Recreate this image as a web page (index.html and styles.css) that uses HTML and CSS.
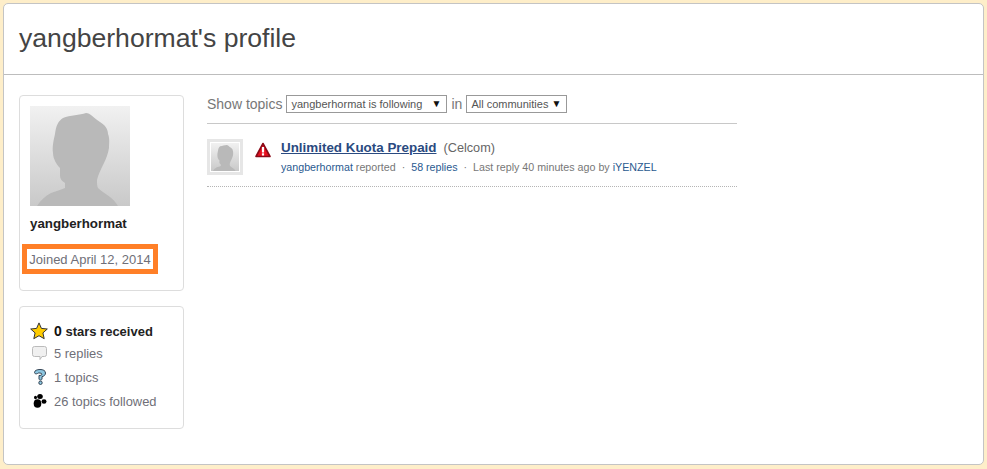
FILE: index.html
```html
<!DOCTYPE html>
<html lang="en">
<head>
<meta charset="utf-8">
<title>yangberhormat's profile</title>
<link rel="stylesheet" href="styles.css">
</head>
<body>
<div class="page">
  <header class="head"><h1>yangberhormat's profile</h1></header>
  <div class="content">
    <aside class="side">
      <section class="box profile">
        <svg class="avatar" width="100" height="100" viewBox="0 0 100 100">
          <defs><linearGradient id="g" x1="0" y1="0" x2="0" y2="1"><stop offset="0" stop-color="#f1f1f1"/><stop offset="1" stop-color="#c9c9c9"/></linearGradient></defs>
          <rect width="100" height="100" fill="url(#g)"/>
          <path d="M7 100C11 94 15 90 21 87C26 85 31 84 35 82L35 77C32 75 30 73 30 70L30 62C27 59 23 53 23 47C22 40 24 33 25 28C26 20 28 15 33 12C40 9 50 9 56 7C60 7 64 12 70 16C75 19 78 23 78 28C80 33 79 38 79 42C78 48 76 53 74 57C71 63 68 69 67 74C67 78 67 80 68 82C71 85 76 88 80 91C84 94 86 97 88 100Z" fill="#b9b9b9"/>
        </svg>
        <div class="name">yangberhormat</div>
        <div class="joined">Joined April 12, 2014</div>
      </section>
      <section class="box stats">
        <div class="stat strong">
          <svg class="ico" width="18" height="18" viewBox="0 0 18 18"><path d="M9 .9l2.400 5.500 5.900.6-4.400 3.900 1.300 5.800L9 13.700l-5.200 3 1.300-5.800L.7 7l5.900-.6z" fill="#fc0" stroke="#333" stroke-width="1" stroke-linejoin="round"/></svg>
          <span><b class="count">0</b> stars received</span>
        </div>
        <div class="stat">
          <svg class="ico" width="18" height="18" viewBox="0 0 18 18"><path d="M4.500 2.500h10a2 2 0 0 1 2 2v6a2 2 0 0 1-2 2h-2.500l-2 3v-3h-5.500a2 2 0 0 1-2-2v-6a2 2 0 0 1 2-2z" fill="#f0f0f0" stroke="#bbb"/></svg>
          <span>5 replies</span>
        </div>
        <div class="stat">
          <svg class="ico" width="18" height="18" viewBox="0 0 18 18"><path d="M4.500 4.500C4.500 2.500 7 1.500 10 1.500s5.500 1 5.500 3.500c0 2-1.500 3.200-3.500 3.700v2.300c0 .8-1 1-1.500 1s-1.500-.2-1.500-1V7.500c1.500 0 3-.3 3-1.500 0-1-4-1.500-4.500-.5-.8.6-3 .5-3-1z" fill="#8cc6e0" stroke="#345" stroke-width="1"/><circle cx="10.500" cy="14.800" r="1.700" fill="#8cc6e0" stroke="#345"/></svg>
          <span>1 topics</span>
        </div>
        <div class="stat">
          <svg class="ico" width="18" height="18" viewBox="0 0 18 18"><ellipse cx="7.500" cy="11.500" rx="3.800" ry="4.300"/><ellipse cx="10" cy="4.500" rx="2.800" ry="2.500"/><ellipse cx="5.500" cy="5.500" rx="1.500" ry="1.800"/><ellipse cx="14" cy="9.500" rx="2.500" ry="2.300"/></svg>
          <span>26 topics followed</span>
        </div>
      </section>
    </aside>
    <main class="main">
      <div class="filter">
        <span>Show topics</span>
        <div class="select wide"><span>yangberhormat is following</span><i class="arrow">▼</i></div>
        <span>in</span>
        <div class="select narrow"><span>All communities</span><i class="arrow">▼</i></div>
      </div>
      <article class="topic">
        <div class="thumb">
          <svg width="28" height="28" viewBox="0 0 100 100">
            <defs><linearGradient id="t" x1="0" y1="0" x2="0" y2="1"><stop offset="0" stop-color="#f1f1f1"/><stop offset="1" stop-color="#c9c9c9"/></linearGradient></defs>
            <rect width="100" height="100" fill="url(#t)"/>
            <path d="M7 100C11 94 15 90 21 87C26 85 31 84 35 82L35 77C32 75 30 73 30 70L30 62C27 59 23 53 23 47C22 40 24 33 25 28C26 20 28 15 33 12C40 9 50 9 56 7C60 7 64 12 70 16C75 19 78 23 78 28C80 33 79 38 79 42C78 48 76 53 74 57C71 63 68 69 67 74C67 78 67 80 68 82C71 85 76 88 80 91C84 94 86 97 88 100Z" fill="#b9b9b9"/>
          </svg>
        </div>
        <svg class="alert" width="16" height="16" viewBox="0 0 16 16"><path d="M8 1.500L15 14.500H1z" fill="#e8101f" stroke="#8a0a18" stroke-width="1.600" stroke-linejoin="round"/><rect x="6.900" y="5" width="2.200" height="5.500" fill="#fff"/><rect x="6.900" y="11.300" width="2.200" height="2.200" fill="#fff"/></svg>
        <div class="topic-body">
          <div class="title"><a href="#">Unlimited Kuota Prepaid</a><span class="tag">(Celcom)</span></div>
          <div class="meta"><a href="#">yangberhormat</a> reported <span class="dot">·</span> <a href="#">58 replies</a> <span class="dot">·</span> Last reply 40 minutes ago by <a href="#">iYENZEL</a></div>
        </div>
      </article>
    </main>
  </div>
</div>
</body>
</html>
```

FILE: styles.css
```css
* { box-sizing: border-box; }
html, body { height: 100%; }
body {
  margin: 0;
  padding: 3px 3px 4px;
  background: #feeec9;
  font-family: "Liberation Sans", Arial, sans-serif;
  color: #6b6b6b;
}
.page {
  height: 462px;
  background: #fff;
  border: 1px solid #c4c4c4;
  border-radius: 5px;
}
.head {
  height: 71px;
  border-bottom: 1px solid #bdbdbd;
  padding: 18px 15px 0;
}
h1 {
  margin: 0;
  font-size: 26.6px;
  line-height: 32px;
  font-weight: 400;
  color: #444;
}
.content {
  display: flex;
  padding: 20px 15px 0;
  gap: 23px;
}
.side { width: 165px; flex: none; }
.box {
  background: #fff;
  border: 1px solid #ddd;
  border-radius: 4px;
}
.profile {
  height: 196px;
  padding: 10px 0 0 10px;
}
.avatar { display: block; }
.name {
  margin-top: 9px;
  font-size: 13.3px;
  line-height: 17px;
  font-weight: 700;
  color: #222;
}
.joined {
  width: 136px;
  height: 30px;
  margin: 12px 0 0 -8px;
  border: 5px solid #ff7f27;
  padding-top: 1px;
  font-size: 13px;
  line-height: 20px;
  text-align: center;
  white-space: nowrap;
  color: #6f6f78;
}
.stats {
  height: 123px;
  margin-top: 15px;
  padding: 13px 0 0 10px;
}
.stat {
  display: flex;
  align-items: center;
  gap: 6px;
  height: 24px;
  font-size: 12.9px;
  color: #6f6f78;
}
.stat.strong { height: 22px; margin-bottom: -1px; font-size: 13px; font-weight: 700; color: #222; }
.ico { flex: none; }
.count { font-size: 14px; color: #111; }
.main { width: 530px; flex: none; }
.filter {
  display: flex;
  align-items: center;
  gap: 4px;
  height: 29px;
  border-bottom: 1px solid #c8c8c8;
  padding-bottom: 11px;
  font-size: 14px;
  color: #777;
}
.select {
  display: flex;
  align-items: center;
  justify-content: space-between;
  height: 18px;
  border: 1px solid #999;
  padding: 0 4px;
  font-size: 11px;
  color: #555;
}
.wide { width: 161px; }
.narrow { width: 101px; }
.arrow { font-style: normal; font-size: 10px; color: #111; padding-right: 1px; }
.topic {
  display: flex;
  height: 63px;
  padding-top: 15px;
  border-bottom: 1px dotted #b5b5b5;
}
.thumb {
  width: 36px;
  height: 36px;
  border: 3px solid #e6e6e6;
  flex: none;
}
.thumb svg { display: block; margin: 1px 0 0 1px; }
.alert { margin: 3px 0 0 12px; flex: none; }
.topic-body { margin-left: 10px; }
.title { font-size: 13.4px; line-height: 17px; color: #666; }
.title a { font-weight: 700; color: #2a4a80; }
.tag { margin-left: 7px; font-size: 12.7px; }
.meta { margin-top: 3px; font-size: 10.7px; line-height: 14px; color: #777; }
.meta a { color: #2a5a90; text-decoration: none; }
.dot { margin: 0 3px; }
```
